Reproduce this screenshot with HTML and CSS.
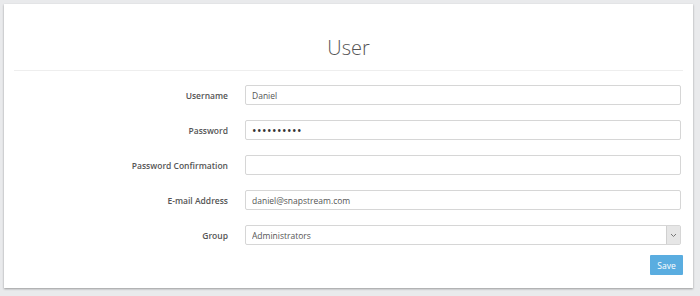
FILE: index.html
```html
<!DOCTYPE html>
<html>
<head>
    <title>User</title>
    <link rel="stylesheet" href="styles.css">
</head>
<body>
    <div class="panel">
        <h2 class="panel-title">User</h2>
        <form class="user-form">
            <div class="form-row">
                <label for="username">Username</label>
                <input type="text" id="username" value="Daniel">
            </div>
            <div class="form-row">
                <label for="password">Password</label>
                <input type="password" id="password" value="secretpass">
            </div>
            <div class="form-row">
                <label for="password-confirm">Password Confirmation</label>
                <input type="password" id="password-confirm">
            </div>
            <div class="form-row">
                <label for="email">E-mail Address</label>
                <input type="text" id="email" value="daniel@snapstream.com">
            </div>
            <div class="form-row">
                <label for="group">Group</label>
                <div class="select-wrap">
                    <select id="group">
                        <option>Administrators</option>
                    </select>
                    <span class="select-arrow">
                        <svg width="7" height="5" viewBox="0 0 7 5"><path d="M1 1 L3.5 3.5 L6 1" fill="none" stroke="#777" stroke-width="1"/></svg>
                    </span>
                </div>
            </div>
            <div class="form-actions">
                <button type="button" class="save-button">Save</button>
            </div>
        </form>
    </div>
</body>
</html>
```

FILE: styles.css
```css
body {
    margin: 0;
    padding: 4px 7px 8px 4px;
    background-color: #e9eaec;
    font-family: "Open Sans", Arial, sans-serif;
    color: #555555;
}
.panel {
    background-color: #ffffff;
    box-shadow: 0 1px 2px rgba(0, 0, 0, 0.35);
    padding: 0 10px 10px 10px;
    height: 274px;
}
.panel-title {
    margin: 0;
    padding: 32px 0 10px 0;
    text-align: center;
    font-size: 20px;
    font-weight: 300;
    line-height: 24px;
    color: #555555;
    border-bottom: 1px solid #eeeeee;
}
.user-form {
    padding-top: 14px;
}
.form-row {
    display: flex;
    align-items: center;
    height: 20px;
    margin-bottom: 15px;
}
.form-row label {
    width: 214px;
    text-align: right;
    font-size: 8.5px;
    font-weight: 600;
    color: #555555;
    margin-right: 17px;
}
.form-row input,
.select-wrap {
    flex: 1;
    height: 20px;
    box-sizing: border-box;
    margin-right: 2px;
}
.form-row input {
    border: 1px solid #d6d6d6;
    border-radius: 2px;
    padding: 0 6px;
    font-family: "Open Sans", Arial, sans-serif;
    font-size: 8.5px;
    color: #555555;
    outline: none;
}
.form-row input[type="password"] {
    font-size: 12px;
    letter-spacing: 0.5px;
    color: #333333;
}
.select-wrap {
    position: relative;
}
.select-wrap select {
    display: block;
    width: 100%;
    height: 20px;
    border: 1px solid #d6d6d6;
    border-radius: 2px;
    padding: 0 6px;
    background-color: #ffffff;
    font-family: "Open Sans", Arial, sans-serif;
    font-size: 8.5px;
    color: #555555;
    appearance: none;
    -webkit-appearance: none;
    outline: none;
}
.select-arrow {
    position: absolute;
    right: 1px;
    top: 1px;
    width: 13px;
    height: 18px;
    background-color: #e6e6e6;
    border-left: 1px solid #d0d0d0;
    display: flex;
    align-items: center;
    justify-content: center;
}
.form-actions {
    display: flex;
    justify-content: flex-end;
    margin-top: -5px;
}
.save-button {
    width: 33px;
    height: 20px;
    margin-right: 0;
    padding: 0;
    border: none;
    border-radius: 1px;
    background-color: #5aade0;
    color: #ffffff;
    font-family: "Open Sans", Arial, sans-serif;
    font-size: 8.5px;
    cursor: pointer;
}
```
